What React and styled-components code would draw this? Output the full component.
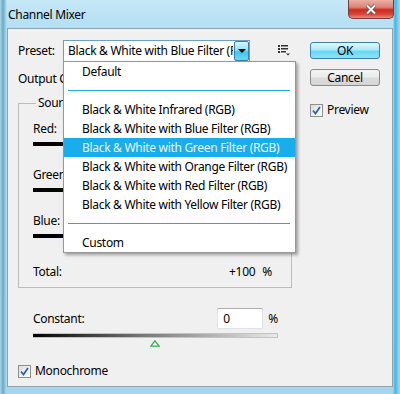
import React from 'react';
import styled, { createGlobalStyle } from 'styled-components';

const GlobalStyle = createGlobalStyle`
  html, body {
    margin: 0;
    padding: 0;
  }
  body {
    width: 400px;
    height: 394px;
    overflow: hidden;
    font-family: "Noto Sans", "Segoe UI", sans-serif;
    font-size: 12px;
    letter-spacing: -0.3px;
    color: #000;
  }
`;

const Window = styled.div`
  width: 400px;
  height: 394px;
  box-sizing: border-box;
  display: flex;
  flex-direction: column;
  padding: 0 7px 7px 7px;
  background:
    linear-gradient(to right, #a9d7ec 0, #6aa9c2 3px, #a7d6ec 6px, transparent 7px),
    linear-gradient(to left, #a9d9ee 0, #44b6df 5px, transparent 7px),
    linear-gradient(to bottom, #c6e8f7 0, #b3def2 28px, #a6d5ec 100%);
`;

const TitleBar = styled.div`
  height: 28px;
  display: flex;
  justify-content: space-between;
  align-items: flex-start;
`;

const Title = styled.div`
  margin: 7px 0 0 1px;
  line-height: 16px;
`;

const CloseButton = styled.div`
  width: 46px;
  height: 19px;
  margin-right: -1px;
  box-sizing: border-box;
  border: 1px solid #7b3a36;
  border-top: none;
  border-radius: 0 0 5px 5px;
  background: linear-gradient(to bottom, #eab0a6 0, #dc8276 40%, #cc2a1c 55%, #d8483a 80%, #e88e78 100%);
  display: flex;
  align-items: center;
  justify-content: center;
`;

const Client = styled.div`
  flex: 1;
  background: #f0f0f0;
  border: 1px solid #8fa3ae;
  display: grid;
  grid-template-columns: 274px 70px;
  column-gap: 18px;
  align-content: start;
  padding: 11px 12px 0 10px;
`;

const LeftColumn = styled.div`
  display: flex;
  flex-direction: column;
`;

const RightColumn = styled.div`
  display: flex;
  flex-direction: column;
  padding-top: 2px;
`;

const Row = styled.div`
  display: flex;
  align-items: center;
  height: 22px;
  margin-top: ${p => p.$top || 0}px;
`;

const Label = styled.span`
  width: ${p => (p.$width ? `${p.$width}px` : 'auto')};
  flex: ${p => (p.$grow ? 1 : 'none')};
  white-space: nowrap;
  overflow: ${p => (p.$clip ? 'hidden' : 'visible')};
  line-height: 14px;
`;

const SelectBox = styled.div`
  position: relative;
  width: 187px;
  height: 22px;
  box-sizing: border-box;
  display: flex;
  background: #fff;
  border: 1px solid #6c9ec6;
`;

const SelectText = styled.div`
  flex: 1;
  overflow: hidden;
  white-space: nowrap;
  padding-left: 4px;
  line-height: 20px;
`;

const SelectArrow = styled.div`
  width: 15px;
  box-sizing: border-box;
  border: 1px solid #3c7fb1;
  border-radius: 2px;
  margin: 0 0 0 1px;
  background: linear-gradient(to bottom, #d6f5fd 0, #8fe3f8 45%, #3fc7ec 55%, #6fd8f3 100%);
  display: flex;
  align-items: center;
  justify-content: center;
`;

const Caret = styled.div`
  width: 0;
  height: 0;
  border-left: 4px solid transparent;
  border-right: 4px solid transparent;
  border-top: 4px solid #000;
`;

const MenuIcon = styled.svg`
  margin-left: 28px;
  margin-top: -2px;
`;

const Dropdown = styled.div`
  position: absolute;
  top: 100%;
  left: -1px;
  width: 233px;
  box-sizing: border-box;
  background: #fff;
  border: 1px solid #979797;
  box-shadow: 2px 2px 3px rgba(0, 0, 0, 0.35);
  z-index: 10;
`;

const Item = styled.div`
  height: 19px;
  line-height: 19px;
  padding-left: 18px;
  white-space: nowrap;
  background: ${p => (p.$active ? '#19adee' : 'transparent')};
  color: ${p => (p.$active ? '#eaf6ff' : '#000')};
`;

const Separator = styled.div`
  height: 19px;
  display: flex;
  align-items: center;
  padding: 0 5px 0 4px;

  &::after {
    content: '';
    flex: 1;
    height: 1px;
    background: #1fa9e5;
  }
`;

const GroupBox = styled.fieldset`
  margin: 6px 0 0 0;
  padding: 12px 14px 8px 14px;
  border: 1px solid #bcbcbc;
  min-width: 0;
`;

const Legend = styled.legend`
  padding: 0 2px;
  margin-left: 3px;
  line-height: 14px;
`;

const SliderBlock = styled.div`
  display: flex;
  flex-direction: column;
  margin-bottom: 22px;
`;

const Bar = styled.div`
  height: 4px;
  margin-top: 6px;
  background: linear-gradient(to right, #000, ${p => p.$color});
`;

const TotalRow = styled.div`
  display: flex;
  justify-content: flex-end;
  margin-top: 27px;
  padding-right: 5px;
  line-height: 14px;
`;

const TotalLabel = styled.span`
  flex: 1;
`;

const Percent = styled.span`
  margin-left: ${p => p.$gap || 5}px;
`;

const ConstantRow = styled.div`
  display: flex;
  align-items: center;
  height: 21px;
  margin-top: 20px;
  padding: 0 14px 0 15px;
`;

const NumberBox = styled.div`
  width: 46px;
  height: 21px;
  box-sizing: border-box;
  background: #fff;
  border: 1px solid #e2e3ea;
  border-top-color: #abadb3;
  padding-left: 5px;
  line-height: 19px;
`;

const ConstantSlider = styled.div`
  position: relative;
  height: 5px;
  margin: 4px 14px 0 15px;
  box-sizing: border-box;
  border: 1px solid #c4c4c4;
  border-left: none;
  background: linear-gradient(to right, #000 0, #777 45%, #e9e9e9 100%);
`;

const Handle = styled.svg`
  position: absolute;
  top: 6px;
  margin-left: -5px;
`;

const CheckRow = styled.label`
  display: flex;
  align-items: center;
  height: 14px;
  margin-top: ${p => p.$top || 0}px;
  gap: 4px;
  line-height: 14px;
`;

const CheckBox = styled.span`
  width: 13px;
  height: 13px;
  box-sizing: border-box;
  border: 1px solid #8e8f8f;
  background: linear-gradient(135deg, #dcdcdc, #fff);
  display: flex;
  align-items: center;
  justify-content: center;
`;

const Button = styled.div`
  height: 17px;
  box-sizing: border-box;
  margin-top: ${p => p.$top || 0}px;
  border: 1px solid ${p => (p.$primary ? '#3c7fb1' : '#8a8a8a')};
  border-radius: 3px;
  background: ${p =>
    p.$primary
      ? 'linear-gradient(to bottom, #e4f8fd 0, #a9ebfa 45%, #6ad8f2 55%, #8ce3f6 100%)'
      : 'linear-gradient(to bottom, #f4f4f4 0, #ececec 45%, #dcdcdc 55%, #d4d4d4 100%)'};
  text-align: center;
  line-height: 15px;
`;

const presets = [
  'Black & White Infrared (RGB)',
  'Black & White with Blue Filter (RGB)',
  'Black & White with Green Filter (RGB)',
  'Black & White with Orange Filter (RGB)',
  'Black & White with Red Filter (RGB)',
  'Black & White with Yellow Filter (RGB)',
];

const sources = [
  { name: 'Red:', color: '#7a0000' },
  { name: 'Green:', color: '#006400' },
  { name: 'Blue:', color: '#000070' },
];

const Check = () => (
  <svg width="9" height="9" viewBox="0 0 9 9">
    <path d="M1 4.5 L3.5 7.5 L8 1" fill="none" stroke="#2a5fae" strokeWidth="1.7" />
  </svg>
);

const App = () => {
  const constant = 0;
  const pos = ((constant + 200) / 400) * 100;

  return (
    <>
      <GlobalStyle />
      <Window>
        <TitleBar>
          <Title>Channel Mixer</Title>
          <CloseButton>
            <svg width="12" height="11" viewBox="0 0 12 11">
              <path d="M2 1.5 L10 9.5 M10 1.5 L2 9.5" stroke="#5a4a4a" strokeWidth="3.4" />
              <path d="M2 1.5 L10 9.5 M10 1.5 L2 9.5" stroke="#fff" strokeWidth="2" />
            </svg>
          </CloseButton>
        </TitleBar>
        <Client>
          <LeftColumn>
            <Row>
              <Label $width={45}>Preset:</Label>
              <SelectBox>
                <SelectText>Black &amp; White with Blue Filter (RGB)</SelectText>
                <SelectArrow>
                  <Caret />
                </SelectArrow>
                <Dropdown>
                  <Item>Default</Item>
                  <Separator />
                  {presets.map(p => (
                    <Item key={p} $active={p.includes('Green')}>{p}</Item>
                  ))}
                  <Separator />
                  <Item>Custom</Item>
                </Dropdown>
              </SelectBox>
              <MenuIcon width="13" height="11" viewBox="0 0 13 11">
                <g fill="#333">
                  <rect x="0" y="0" width="2" height="2" />
                  <rect x="3" y="0" width="7" height="1.5" />
                  <rect x="0" y="3" width="2" height="2" />
                  <rect x="3" y="3" width="7" height="1.5" />
                  <rect x="0" y="6" width="2" height="2" />
                  <rect x="3" y="6" width="5" height="1.5" />
                  <path d="M8 8.5 L12 8.5 L10 10.5 Z" />
                </g>
              </MenuIcon>
            </Row>
            <Row $top={6}>
              <Label $width={45} $clip>Output Channel:</Label>
            </Row>
            <GroupBox>
              <Legend>Source Channels</Legend>
              {sources.map(s => (
                <SliderBlock key={s.name}>
                  <Label>{s.name}</Label>
                  <Bar $color={s.color} />
                </SliderBlock>
              ))}
              <TotalRow>
                <TotalLabel>Total:</TotalLabel>
                <span>+100</span>
                <Percent $gap={7}>%</Percent>
              </TotalRow>
            </GroupBox>
            <ConstantRow>
              <Label $grow>Constant:</Label>
              <NumberBox>{constant}</NumberBox>
              <Percent>%</Percent>
            </ConstantRow>
            <ConstantSlider>
              <Handle width="10" height="7" viewBox="0 0 10 7" style={{ left: `${pos}%` }}>
                <path d="M5 0.8 L9.2 6.2 L0.8 6.2 Z" fill="#fff" stroke="#2bb34a" strokeWidth="1.3" />
              </Handle>
            </ConstantSlider>
            <CheckRow $top={26}>
              <CheckBox>
                <Check />
              </CheckBox>
              Monochrome
            </CheckRow>
          </LeftColumn>
          <RightColumn>
            <Button $primary>OK</Button>
            <Button $top={10}>Cancel</Button>
            <CheckRow $top={17}>
              <CheckBox>
                <Check />
              </CheckBox>
              Preview
            </CheckRow>
          </RightColumn>
        </Client>
      </Window>
    </>
  );
};

export default App;
